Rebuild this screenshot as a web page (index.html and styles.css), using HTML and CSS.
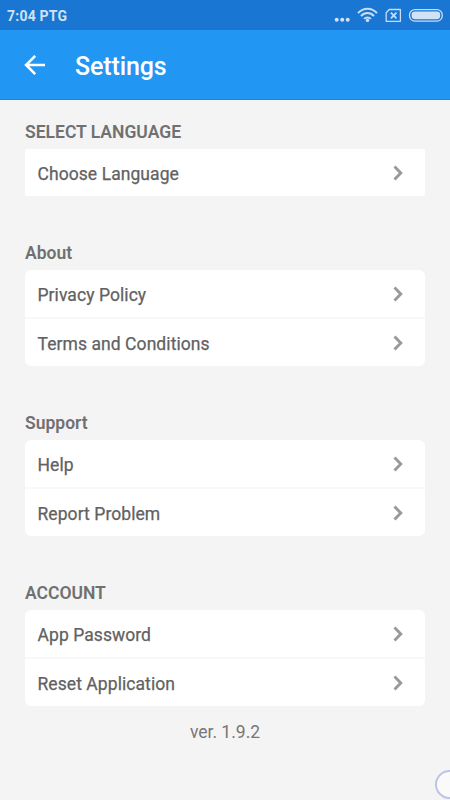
FILE: index.html
```html
<!DOCTYPE html>
<html lang="en">
<head>
<meta charset="utf-8">
<title>Settings</title>
<link rel="stylesheet" href="styles.css">
</head>
<body>
<div class="status">
  <span class="clock">7:04 PTG</span>
  <svg class="status-icons" width="110" height="20" viewBox="0 0 110 20" fill="none" stroke="#c8dcf3">
    <g fill="#d1e2f5" stroke="none"><circle cx="2.7" cy="14.8" r="2"/><circle cx="8.2" cy="14.8" r="2"/><circle cx="13.7" cy="14.8" r="2"/></g>
    <path d="M24 8.2C29.3 2.2 37.7 2.2 43 8.2M27 11.1C30.7 7.1 36.3 7.1 40 11.1M30.1 13.9C32.1 11.9 34.9 11.9 36.9 13.9" stroke-width="2"/>
    <circle cx="33.5" cy="15.4" r="1.7" fill="#d1e2f5" stroke="none"/>
    <path d="M55.2 4.5H66.4V16.3H52.2V7.8Z" stroke-width="1.3" stroke-linejoin="round"/>
    <path d="M56.9 7.7L62.5 13.3M62.5 7.7L56.9 13.3" stroke-width="1.8"/>
    <rect x="75.5" y="4.6" width="32.8" height="11.6" rx="5.4" stroke-width="1.3"/>
    <rect x="77.6" y="6.6" width="28.6" height="7.6" rx="3.4" fill="#d1e2f5" stroke="none"/>
  </svg>
</div>
<header class="bar">
  <svg class="back" width="22" height="22" viewBox="0 0 22 22" fill="none" stroke="#fff" stroke-width="2.6"><path d="M21 11H2.6M11.2 1.9L2.1 11L11.2 20.1"/></svg>
  <h1>Settings</h1>
</header>
<main>
  <section>
    <h2 class="select">SELECT LANGUAGE</h2>
    <div class="card small">
      <div class="row"><span class="language">Choose Language</span><svg class="chevron" viewBox="0 0 10 16"><path d="M1.5 1.5L7.8 8L1.5 14.5"/></svg></div>
    </div>
  </section>
  <section>
    <h2>About</h2>
    <div class="card">
      <div class="row"><span>Privacy Policy</span><svg class="chevron" viewBox="0 0 10 16"><path d="M1.5 1.5L7.8 8L1.5 14.5"/></svg></div>
      <div class="row"><span>Terms and Conditions</span><svg class="chevron" viewBox="0 0 10 16"><path d="M1.5 1.5L7.8 8L1.5 14.5"/></svg></div>
    </div>
  </section>
  <section>
    <h2>Support</h2>
    <div class="card">
      <div class="row"><span>Help</span><svg class="chevron" viewBox="0 0 10 16"><path d="M1.5 1.5L7.8 8L1.5 14.5"/></svg></div>
      <div class="row"><span>Report Problem</span><svg class="chevron" viewBox="0 0 10 16"><path d="M1.5 1.5L7.8 8L1.5 14.5"/></svg></div>
    </div>
  </section>
  <section>
    <h2>ACCOUNT</h2>
    <div class="card">
      <div class="row"><span>App Password</span><svg class="chevron" viewBox="0 0 10 16"><path d="M1.5 1.5L7.8 8L1.5 14.5"/></svg></div>
      <div class="row"><span>Reset Application</span><svg class="chevron" viewBox="0 0 10 16"><path d="M1.5 1.5L7.8 8L1.5 14.5"/></svg></div>
    </div>
  </section>
  <p class="version">ver. 1.9.2</p>
</main>
<div class="assist"></div>
</body>
</html>
```
FILE: styles.css
```css
* { box-sizing: border-box; }
body {
  margin: 0;
  position: relative;
  width: 450px;
  height: 800px;
  overflow: hidden;
  background: #f4f4f4;
  font-family: Roboto, "Liberation Sans", sans-serif;
  color: #616161;
}
.status {
  height: 30px;
  padding: 0 6px 0 7px;
  display: flex;
  justify-content: space-between;
  align-items: center;
  background: #1976d2;
  color: #d1e2f5;
}
.clock { font-size: 14px; font-weight: 700; letter-spacing: 0.22px; line-height: 30px; padding-top: 1px; }
.bar {
  height: 70px;
  display: flex;
  align-items: center;
  padding-left: 24px;
  background: #2196f3;
  border-bottom: 1px solid #1d86dc;
  color: #fff;
}
.back { margin-top: 1px; }
h1 { margin: 0 0 0 29px; padding-top: 4px; font-size: 25px; font-weight: 500; letter-spacing: -0.12px; line-height: 34px; }
main { padding: 21px 25px 0; }
section { margin-bottom: 46px; }
h2 {
  margin: 0;
  height: 28px;
  padding-top: 1px;
  font-size: 17.5px;
  font-weight: 600;
  line-height: 20px;
  color: #707070;
}
.card {
  background: #fff;
  border-radius: 6px;
}
.small { border-radius: 2px; }
.row {
  height: 47px;
  display: flex;
  align-items: center;
  justify-content: space-between;
  padding: 0 22.5px 0 12.5px;
  font-size: 17.5px;
  font-weight: 450;
  line-height: 20px;
  -webkit-text-stroke: 0.25px #616161;
  letter-spacing: 0.07px;
}
.row span { padding-top: 3px; }
.row + .row { height: 49px; border-top: 2px solid #f8f8f8; }
.chevron {
  width: 10px;
  height: 16px;
  fill: none;
  stroke: #999;
  stroke-width: 2.9;
}
.version {
  margin: -30px 0 0;
  text-align: center;
  font-size: 17.5px;
  line-height: 20px;
  color: #777;
}
.assist {
  position: absolute;
  left: 434.5px;
  top: 770px;
  width: 29px;
  height: 29px;
  border: 2px solid #bcc4e8;
  border-radius: 50%;
  background: #fafafa;
}
```
